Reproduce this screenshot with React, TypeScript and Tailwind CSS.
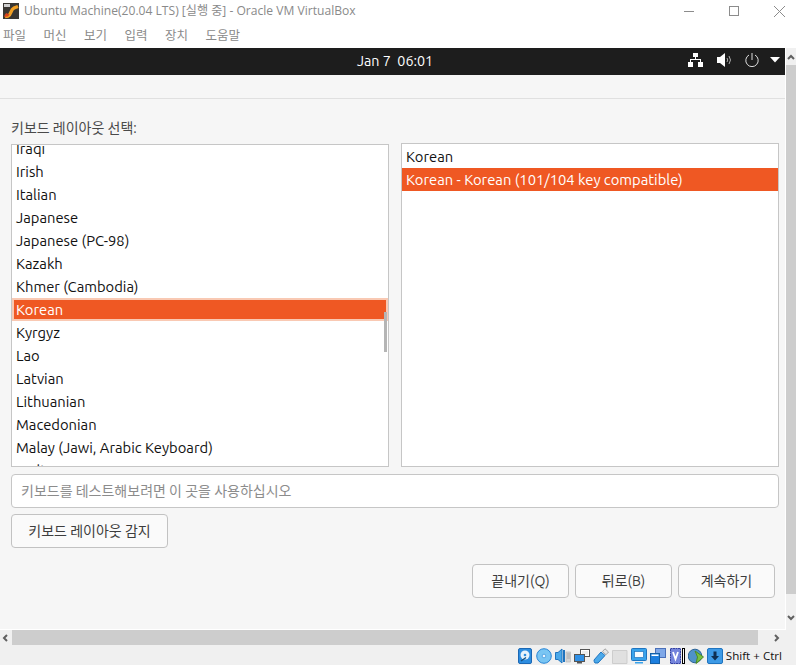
const sans = "font-['Ubuntu','Noto_Sans','Noto_Sans_CJK_KR',sans-serif]";

const leftItems = [
  "Iraqi",
  "Irish",
  "Italian",
  "Japanese",
  "Japanese (PC-98)",
  "Kazakh",
  "Khmer (Cambodia)",
  "Korean",
  "Kyrgyz",
  "Lao",
  "Latvian",
  "Lithuanian",
  "Macedonian",
  "Malay (Jawi, Arabic Keyboard)",
  "Malt",
];

const menus = ["파일", "머신", "보기", "입력", "장치", "도움말"];

const Logo = () => (
  <svg width="16" height="16" viewBox="0 0 16 16">
    <rect width="16" height="16" fill="#3a3733" />
    <rect x="1" y="1" width="6" height="3" fill="#cfcfcf" />
    <path d="M2 13.5 L5 13 Q7 12 8 9 Q9 6 11 5 L15 3.5" fill="none" stroke="#f2a024" strokeWidth="3.4" />
    <path d="M1 14 L5 13.5 L6.5 11.5 L3 10z" fill="#d8431c" />
  </svg>
);

const Chevron = ({ d }: { d: string }) => (
  <svg width="8" height="8" viewBox="0 0 8 8">
    <path d={d} fill="none" stroke="#606060" strokeWidth="2" />
  </svg>
);

const StatusIcons = () => (
  <div className="flex items-center gap-[3px]">
    {/* hard disk */}
    <svg width="16" height="16" viewBox="0 0 16 16">
      <rect x="1.5" y="0.5" width="13" height="15" rx="1.5" fill="#2d8de0" stroke="#1c68b4" />
      <circle cx="8" cy="7" r="4.5" fill="#e9f3fb" />
      <circle cx="8" cy="7" r="1.3" fill="#2d8de0" />
      <path d="M4 13 L9 9.5" stroke="#16507f" strokeWidth="1.4" />
    </svg>
    {/* optical */}
    <svg width="16" height="16" viewBox="0 0 16 16">
      <circle cx="8" cy="8" r="7.3" fill="#79c5f3" stroke="#2a86d6" />
      <circle cx="8" cy="8" r="1.8" fill="#eaf6ff" stroke="#2a86d6" strokeWidth="0.6" />
    </svg>
    {/* audio */}
    <svg width="16" height="16" viewBox="0 0 16 16">
      <path d="M0.5 4.5h2.5l4-3.5v14l-4-3.5H0.5z" fill="#4ba9ea" stroke="#1f74bf" />
      <rect x="8" y="2" width="2" height="12" fill="#1f74bf" />
      <rect x="11" y="4" width="4.5" height="10" fill="#d4d4d4" stroke="#b4b4b4" strokeWidth="0.6" />
      <path d="M12 6h3M12 8h3M12 10h3" stroke="#999" strokeWidth="0.7" />
    </svg>
    {/* network */}
    <svg width="16" height="16" viewBox="0 0 16 16">
      <rect x="6.5" y="1.5" width="9" height="7" fill="#fff" stroke="#555" />
      <rect x="8" y="3" width="6" height="4" fill="#eee" />
      <rect x="0.5" y="6.5" width="10" height="7" fill="#2f90e6" stroke="#555" />
      <rect x="3" y="14" width="5" height="1.5" fill="#555" />
    </svg>
    {/* usb */}
    <svg width="16" height="16" viewBox="0 0 16 16">
      <path d="M1 12 L8 4 L12 7.5 L5 15 L2 15 Q1 14 1 12z" fill="#4ba9ea" stroke="#1f74bf" />
      <path d="M9.5 3.5 L12 0.8 L15.5 4 L13 6.8z" fill="#e4e4e4" stroke="#888" strokeWidth="0.7" />
    </svg>
    {/* shared folders */}
    <svg width="16" height="16" viewBox="0 0 16 16">
      <path d="M0.5 2.5h14.5v13H0.5z" fill="#e0e0e0" stroke="#cdcdcd" />
    </svg>
    {/* display */}
    <svg width="16" height="16" viewBox="0 0 16 16">
      <rect x="0.5" y="0.5" width="15" height="12" rx="1" fill="#38a3ec" stroke="#1f74bf" />
      <rect x="3.5" y="3.5" width="9" height="6" fill="#f6fbff" stroke="#1f74bf" strokeWidth="0.7" />
      <rect x="4" y="14" width="8" height="1.5" fill="#38a3ec" />
    </svg>
    {/* capture */}
    <svg width="16" height="16" viewBox="0 0 16 16">
      <rect x="5.5" y="0.5" width="10" height="9" fill="#7fa8e8" stroke="#4a6fb8" />
      <rect x="0.5" y="5.5" width="9" height="10" fill="#1c7ede" stroke="#135fa6" />
      <rect x="1.5" y="6.5" width="7" height="1.5" fill="#fff" />
    </svg>
    {/* recording chip */}
    <svg width="16" height="16" viewBox="0 0 16 16">
      <rect x="1.5" y="0.5" width="10" height="15" fill="#7484dc" stroke="#3442a4" strokeDasharray="2 0.5" />
      <path d="M4 4 L6.5 11 L9 4" fill="none" stroke="#fff" strokeWidth="1.8" />
      <rect x="13.5" y="0.5" width="2" height="15" fill="#fff" stroke="#000" />
    </svg>
    {/* guest additions */}
    <svg width="16" height="16" viewBox="0 0 16 16">
      <circle cx="7" cy="8" r="6.8" fill="#4f92c8" stroke="#2a6296" />
      <path d="M7 3 L15.5 9 L8 15.5 L9.5 9z" fill="#76c043" stroke="#4d8a24" />
    </svg>
    {/* keyboard capture */}
    <svg width="16" height="16" viewBox="0 0 16 16">
      <rect x="0.5" y="0.5" width="15" height="15" rx="1.5" fill="#3d9ae6" stroke="#1f74bf" />
      <path d="M6.5 3.5h3v4.5h2.5L8 12.5 4 8h2.5z" fill="#0f2f52" />
    </svg>
  </div>
);

const Button = ({ label, width }: { label: string; width: string }) => (
  <button
    type="button"
    className={`h-[34px] ${width} rounded-[4px] border border-[#c2c2c2] bg-[#fafafa] text-[14px] text-[#3d3d3d]`}
  >
    {label}
  </button>
);

export default function App() {
  return (
    <div className={`flex h-[665px] w-[796px] flex-col overflow-hidden bg-[#f0f0f0] ${sans}`}>
      <div className="flex h-[48px] flex-col bg-white font-['Open_Sans','Noto_Sans_CJK_KR',sans-serif]">
        <div className="flex h-[24px] items-center pb-[2px] pl-[3px]">
          <Logo />
          <span className="ml-[5px] text-[12.1px] text-[#8a8a8a]">Ubuntu Machine(20.04 LTS) [실행 중] - Oracle VM VirtualBox</span>
          <div className="ml-auto flex items-center gap-[35px] pr-[11px]">
            <div className="h-px w-[10px] bg-[#8c8c8c]" />
            <div className="h-[10px] w-[10px] border border-[#8c8c8c]" />
            <svg width="11" height="11" viewBox="0 0 11 11">
              <path d="M0 0L11 11M11 0L0 11" stroke="#8c8c8c" />
            </svg>
          </div>
        </div>
        <div className="flex h-[24px] items-center gap-[17.5px] pl-[3px] text-[12.5px] text-[#8a8a8a]">
          {menus.map((m) => (
            <span key={m}>{m}</span>
          ))}
        </div>
      </div>

      <div className="flex h-[582px]">
        <div className="flex w-[786px] flex-col border-r border-b border-white bg-[#f6f6f6]">
          <div className="relative flex h-[27px] items-center justify-center bg-[#1d1d1d] pl-[5px] text-[14.3px] text-white">
            <span>Jan 7&nbsp;&nbsp;06:01</span>
            <div className="absolute right-[5px] top-[5px] flex items-center">
              <svg width="15" height="14" viewBox="0 0 15 14" fill="#fff">
                <rect x="5" y="0" width="5" height="4" />
                <rect x="0" y="9" width="5" height="5" />
                <rect x="10" y="9" width="5" height="5" />
                <path d="M7 4h1v2h5v3h-1V7H3v2H2V6h5z" />
              </svg>
              <svg className="ml-[14px]" width="15" height="14" viewBox="0 0 15 14" fill="#fff">
                <path d="M0 4h3l5-4v14l-5-4H0z" />
                <path d="M10 5q1.5 2 0 4M12 3q3 4 0 8" fill="none" stroke="#aaa" />
              </svg>
              <svg className="ml-[13px]" width="14" height="14" viewBox="0 0 14 14">
                <path d="M4 2a6.2 6.2 0 1 0 6 0M7 0v7" fill="none" stroke="#ddd" />
              </svg>
              <svg className="ml-[11px]" width="10" height="6" viewBox="0 0 10 6" fill="#fff">
                <path d="M0 0h10L5 5.5z" />
              </svg>
            </div>
          </div>

          <div className="box-content h-[23px] border-b border-[#e0e0e0]" />

          <label className="mt-[19px] pl-[11px] text-[14px] leading-[20px] text-[#4a4a4a]">키보드 레이아웃 선택:</label>

          <div className="mt-[6px] flex pl-[11px]">
            <div className="relative h-[323px] w-[378px] overflow-hidden border border-[#c6c6c6] bg-white">
              <div className="-mt-[8px]">
                {leftItems.map((item) => (
                  <div
                    key={item}
                    className={`h-[23px] text-[14.75px] ${
                      item === "Korean"
                        ? "border-2 border-[#f9c9b3] bg-[#ef5823] pl-[2px] leading-[19px] text-white"
                        : "pl-[4px] leading-[23px] text-[#111]"
                    }`}
                  >
                    {item}
                  </div>
                ))}
              </div>
              <div className="absolute right-px top-[167px] h-[40px] w-[3px] bg-[#b5b5b5]" />
            </div>
            <div className="ml-[12px] h-[324px] w-[378px] -translate-y-px border border-[#c6c6c6] bg-white pt-px">
              <div className="h-[23px] pl-[4px] text-[14.75px] leading-[23px] text-[#111]">Korean</div>
              <div className="h-[23px] bg-[#ef5823] pl-[4px] text-[14.75px] leading-[23px] text-white">
                Korean - Korean (101/104 key compatible)
              </div>
            </div>
          </div>

          <div className="mt-[6px] pl-[11px]">
            <div className="flex h-[34px] w-[768px] items-center rounded-[4px] border border-[#c6c6c6] bg-white pl-[9px] text-[14px] text-[#8c8c8c]">
              키보드를 테스트해보려면 이 곳을 사용하십시오
            </div>
          </div>

          <div className="mt-[6px] pl-[11px]">
            <Button label="키보드 레이아웃 감지" width="w-[157px]" />
          </div>

          <div className="mt-[16px] flex justify-end gap-[6px] pr-[10px]">
            <Button label="끝내기(Q)" width="w-[97px]" />
            <Button label="뒤로(B)" width="w-[97px]" />
            <Button label="계속하기" width="w-[97px]" />
          </div>
        </div>

        <div className="flex w-[10px] flex-col items-center bg-[#f0f0f0]">
          <div className="flex h-[17px] items-center">
            <Chevron d="M1 6L4 3L7 6" />
          </div>
          <div className="h-[529px] w-full bg-[#cdcdcd]" />
          <div className="mt-auto flex h-[17px] items-center pb-[8px]">
            <Chevron d="M1 2L4 5L7 2" />
          </div>
        </div>
      </div>

      <div className="h-[18px]">
        <div className="flex h-[15px] items-center">
          <div className="flex w-[12px] justify-center">
            <Chevron d="M5 1L2 4L5 7" />
          </div>
          <div className="h-[15px] w-[746px] bg-[#cdcdcd]" />
          <div className="ml-[14px]">
            <Chevron d="M3 1L6 4L3 7" />
          </div>
        </div>
      </div>

      <div className="flex h-[17px] items-center justify-end pb-px pr-[14px] font-['Open_Sans',sans-serif] text-[11.6px] text-[#111]">
        <StatusIcons />
        <span className="ml-[3px]">Shift + Ctrl</span>
      </div>
    </div>
  );
}
